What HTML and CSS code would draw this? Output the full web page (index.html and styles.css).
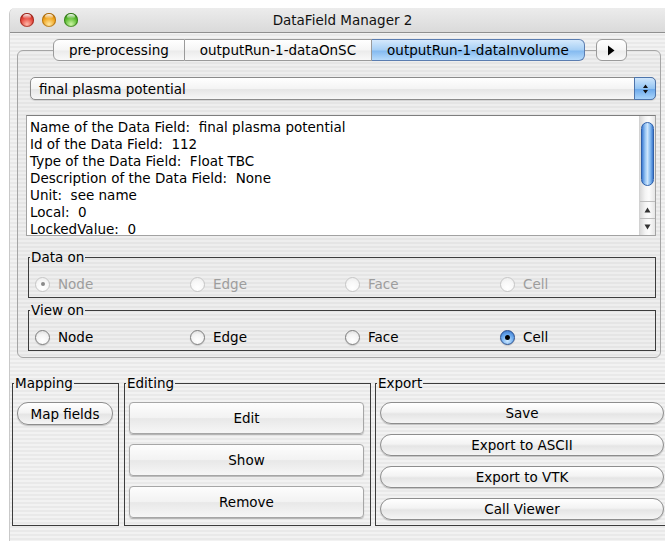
FILE: index.html
```html
<!DOCTYPE html>
<html>
<head>
<meta charset="utf-8">
<title>DataField Manager 2</title>
<link rel="stylesheet" href="styles.css">
</head>
<body>
<div class="window">
  <header class="titlebar">
    <div class="lights">
      <span class="light close"></span>
      <span class="light minimize"></span>
      <span class="light zoom"></span>
    </div>
    <div class="title">DataField Manager 2</div>
    <div></div>
  </header>

  <main class="content">
    <div class="tabview">
      <div class="tabstrip">
        <div class="tabs">
          <span class="tab first">pre-processing</span>
          <span class="tab">outputRun-1-dataOnSC</span>
          <span class="tab selected">outputRun-1-dataInvolume</span>
        </div>
        <span class="tab-more">
          <svg width="8" height="11" viewBox="0 0 8 11"><path d="M1 0.5 L7.5 5.5 L1 10.5 Z" fill="#000"/></svg>
        </span>
      </div>

      <section class="tabpanel">
        <div class="popup">
          <span class="popup-label">final plasma potential</span>
          <span class="popup-cap">
            <svg width="7" height="12" viewBox="0 0 7 12"><path d="M3.5 1.5 L6 5 L1 5 Z M3.5 10.5 L6 7 L1 7 Z" fill="#111"/></svg>
          </span>
        </div>

        <div class="textview">
          <div class="textview-text">
            <div class="line">Name of the Data Field:  final plasma potential</div>
            <div class="line">Id of the Data Field:  112</div>
            <div class="line">Type of the Data Field:  Float TBC</div>
            <div class="line">Description of the Data Field:  None</div>
            <div class="line">Unit:  see name</div>
            <div class="line">Local:  0</div>
            <div class="line">LockedValue:  0</div>
          </div>
          <div class="scrollbar">
            <div class="scroll-track"><div class="scroll-thumb"></div></div>
            <div class="scroll-arrow">
              <svg width="7" height="6" viewBox="0 0 7 6"><path d="M3.5 0.5 L6.5 5.5 L0.5 5.5 Z" fill="#333"/></svg>
            </div>
            <div class="scroll-arrow">
              <svg width="7" height="6" viewBox="0 0 7 6"><path d="M3.5 5.5 L6.5 0.5 L0.5 0.5 Z" fill="#333"/></svg>
            </div>
          </div>
        </div>

        <fieldset class="group choice">
          <legend>Data on</legend>
          <div class="radio-row disabled">
            <label class="radio"><span class="radio-dot checked"></span>Node</label>
            <label class="radio"><span class="radio-dot"></span>Edge</label>
            <label class="radio"><span class="radio-dot"></span>Face</label>
            <label class="radio"><span class="radio-dot"></span>Cell</label>
          </div>
        </fieldset>

        <fieldset class="group choice view">
          <legend>View on</legend>
          <div class="radio-row">
            <label class="radio"><span class="radio-dot"></span>Node</label>
            <label class="radio"><span class="radio-dot"></span>Edge</label>
            <label class="radio"><span class="radio-dot"></span>Face</label>
            <label class="radio"><span class="radio-dot checked"></span>Cell</label>
          </div>
        </fieldset>
      </section>
    </div>

    <div class="actions">
      <fieldset class="group mapping">
        <legend>Mapping</legend>
        <div class="group-body">
          <button class="pill map">Map fields</button>
        </div>
      </fieldset>
      <fieldset class="group editing">
        <legend>Editing</legend>
        <div class="group-body">
          <button class="bevel">Edit</button>
          <button class="bevel">Show</button>
          <button class="bevel">Remove</button>
        </div>
      </fieldset>
      <fieldset class="group export">
        <legend>Export</legend>
        <div class="group-body">
          <button class="pill">Save</button>
          <button class="pill">Export to ASCII</button>
          <button class="pill">Export to VTK</button>
          <button class="pill">Call Viewer</button>
        </div>
      </fieldset>
    </div>
  </main>
</div>
</body>
</html>
```

FILE: styles.css
```css
* { box-sizing: border-box; }

html, body {
  margin: 0;
  height: 100%;
}

body {
  background: #fff;
  font-family: "DejaVu Sans", sans-serif;
  font-size: 13.5px;
  color: #000;
  overflow: hidden;
}

/* ---------- window frame ---------- */
.window {
  margin: 8px 0 0 9px;
  height: 533px;
  display: flex;
  flex-direction: column;
  overflow: hidden;
  border-top-left-radius: 6px;
  border-left: 1px solid #c9c9c9;
  background: repeating-linear-gradient(to bottom, #f2f2f2 0, #f2f2f2 2px, #e9e9e9 2px, #e9e9e9 4px);
}

.titlebar {
  flex: none;
  height: 25px;
  display: grid;
  grid-template-columns: 1fr auto 1fr;
  align-items: center;
  background: linear-gradient(#ececec, #dadada);
  border-bottom: 1px solid #8f8f8f;
}

.lights {
  display: flex;
  gap: 8px;
  padding-left: 10px;
}

.light {
  position: relative;
  width: 14px;
  height: 14px;
  border-radius: 50%;
}

/* glossy highlight on each window button */
.light::after {
  content: "";
  position: absolute;
  left: 3px;
  top: 1px;
  width: 8px;
  height: 5px;
  border-radius: 50%;
  background: linear-gradient(rgba(255,255,255,.95), rgba(255,255,255,0));
}

.close {
  background: radial-gradient(circle at 50% 80%, #ffb8a8 0, #e5463b 50%, #a3231b 100%);
  box-shadow: inset 0 0 0 1px rgba(120,20,10,.55);
}

.minimize {
  background: radial-gradient(circle at 50% 80%, #ffe6a0 0, #f0a51f 50%, #b06b06 100%);
  box-shadow: inset 0 0 0 1px rgba(140,80,0,.55);
}

.zoom {
  background: radial-gradient(circle at 50% 80%, #cdf6a6 0, #5bbb30 50%, #2d7a13 100%);
  box-shadow: inset 0 0 0 1px rgba(30,90,10,.55);
}

.title {
  padding-left: 10px;
  color: #111;
}

/* ---------- tab view ---------- */
.content {
  flex: 1;
  display: flex;
  flex-direction: column;
  padding-top: 6px;
}

.tabview {
  margin: 0 4px 0 7px;
}

.tabstrip {
  position: relative;
  z-index: 1;
  display: flex;
  align-items: center;
  gap: 11px;
  height: 22px;
  margin: 0 0 -11px 36px;
}

.tabs {
  display: flex;
  height: 22px;
}

.tab {
  display: flex;
  align-items: center;
  padding: 0 15px;
  border: 1px solid #9a9a9a;
  border-left: none;
  background: linear-gradient(#ffffff, #f5f5f5 50%, #ebebeb 55%, #f9f9f9);
  white-space: nowrap;
}

.tab.first {
  border-left: 1px solid #9a9a9a;
  border-radius: 6px 0 0 6px;
}

.tab.selected {
  border-color: #5b7db0;
  border-radius: 0 6px 6px 0;
  background: linear-gradient(#d5e9fc, #a6cff5 50%, #84baf0 55%, #b7dbfb);
}

.tab-more {
  display: flex;
  align-items: center;
  justify-content: center;
  width: 31px;
  height: 22px;
  border: 1px solid #9a9a9a;
  border-radius: 6px;
  background: linear-gradient(#ffffff, #f5f5f5 50%, #ebebeb 55%, #f9f9f9);
}

.tabpanel {
  border: 1px solid #a5a5a5;
  border-radius: 6px;
  padding: 26px 4px 6px 8px;
  background: rgba(0,0,0,.015);
}

/* ---------- pop-up button ---------- */
.popup {
  display: flex;
  align-items: center;
  height: 23px;
  margin-left: 4px;
  border: 1px solid #8b8b8b;
  border-radius: 5px;
  background: linear-gradient(#ffffff, #f4f4f4 50%, #e6e6e6 55%, #f7f7f7);
  box-shadow: 0 1px 1px rgba(0,0,0,.12);
}

.popup-label {
  flex: 1;
  padding-left: 8px;
}

.popup-cap {
  align-self: stretch;
  width: 22px;
  margin: -1px -1px -1px 0;
  display: flex;
  align-items: center;
  justify-content: center;
  border: 1px solid #4d74ab;
  border-radius: 0 5px 5px 0;
  background: linear-gradient(#cfe6fc, #94c5f3 50%, #6eaaeb 55%, #a9d4fa);
}

/* ---------- text view ---------- */
.textview {
  display: flex;
  height: 121px;
  margin-top: 15px;
  background: #fff;
  border: 1px solid #a2a2a2;
  border-top-color: #7e7e7e;
}

.textview-text {
  flex: 1;
  padding: 3px 0 0 3px;
  line-height: 17px;
  overflow: hidden;
}

.line {
  white-space: pre;
}

.scrollbar {
  flex: none;
  width: 16px;
  display: flex;
  flex-direction: column;
  border-left: 1px solid #d2d2d2;
  background: linear-gradient(to right, #d9d9d9, #f4f4f4 35%, #fcfcfc 60%, #e6e6e6);
}

.scroll-track {
  flex: 1;
  padding: 6px 1px 0;
}

.scroll-thumb {
  height: 64px;
  border: 1px solid #2f60a9;
  border-radius: 7px;
  background: linear-gradient(to right, #3d7cd4, #9cc8f4 30%, #cde5fc 50%, #86bbf0 75%, #3b78cf);
}

.scroll-arrow {
  height: 17px;
  display: flex;
  align-items: center;
  justify-content: center;
  border-top: 1px solid #bdbdbd;
}

/* ---------- titled groups ---------- */
.group {
  margin: 0;
  padding: 0;
  min-width: 0;
  border: 1px solid #3c3c3c;
}

.group legend {
  margin-left: 1px;
  padding: 0 1px;
  line-height: 15px;
}

.choice {
  margin: 14px 0 0 2px;
}

.choice.view {
  margin-top: 5px;
}

.radio-row {
  display: grid;
  grid-template-columns: repeat(4, 1fr);
  padding: 10px 0 4px 6px;
}

.radio {
  display: flex;
  align-items: center;
  gap: 8px;
  height: 18px;
}

.radio-dot {
  flex: none;
  display: grid;
  place-items: center;
  width: 15px;
  height: 15px;
  border-radius: 50%;
  border: 1px solid #7d7d7d;
  background: radial-gradient(circle at 50% 75%, #ffffff 0, #f3f3f3 55%, #d6d6d6 100%);
  box-shadow: 0 1px 1px rgba(0,0,0,.15);
}

.radio-dot.checked {
  border-color: #2b4f8c;
  background: radial-gradient(circle at 50% 75%, #d2ebff 0, #6eacef 50%, #2f6bc4 100%);
}

.radio-dot.checked::after {
  content: "";
  width: 5px;
  height: 5px;
  border-radius: 50%;
  background: #000;
}

.radio-row.disabled .radio {
  color: #9d9d9d;
}

.radio-row.disabled .radio-dot {
  border-color: #c6c6c6;
  background: radial-gradient(circle at 50% 75%, #ffffff 0, #f7f7f7 55%, #e9e9e9 100%);
  box-shadow: none;
}

.radio-row.disabled .radio-dot.checked::after {
  width: 4px;
  height: 4px;
  background: #8a8a8a;
}

/* ---------- action groups ---------- */
.actions {
  display: flex;
  height: 150px;
  margin: 18px -6px 0 0;
  padding-left: 2px;
}

.mapping {
  flex: none;
  width: 107px;
  margin-right: 5px;
}

.editing {
  flex: none;
  width: 247px;
  margin-right: 4px;
}

.export {
  flex: 1;
}

.group-body {
  display: flex;
  flex-direction: column;
  gap: 10px;
  padding: 11px 6px 0 4px;
}

.mapping .group-body {
  align-items: flex-start;
}

button {
  margin: 0;
  padding: 0;
  font: inherit;
  color: #000;
  white-space: nowrap;
}

.pill {
  height: 22px;
  border: 1px solid #8d8d8d;
  border-radius: 11px;
  background: linear-gradient(#ffffff, #f3f3f3 45%, #e5e5e5 55%, #f5f5f5);
  box-shadow: 0 1px 1px rgba(0,0,0,.2);
}

.pill.map {
  width: 96px;
  height: 23px;
  padding: 0;
}

.bevel {
  height: 32px;
  border: 1px solid #a6a6a6;
  border-radius: 4px;
  background: linear-gradient(#fdfdfd, #f2f2f2 50%, #e8e8e8 52%, #f6f6f6);
  box-shadow: 0 1px 1px rgba(0,0,0,.25);
}
```
